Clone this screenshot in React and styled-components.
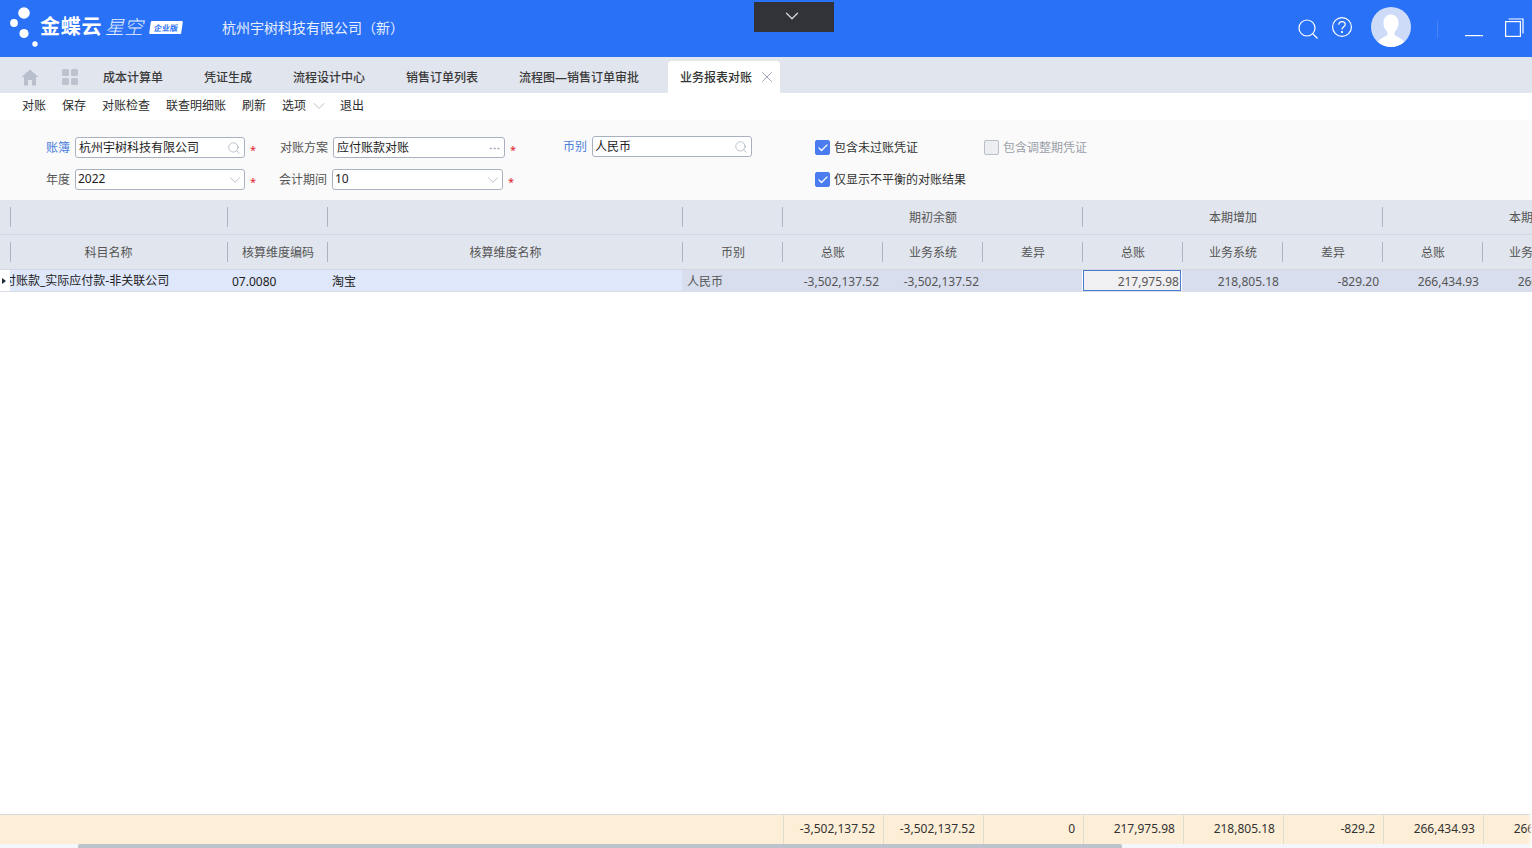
import React from 'react';
import styled, { createGlobalStyle } from 'styled-components';
import { ChevronDown, Search, X, Ellipsis, Check } from 'lucide-react';

const GlobalStyle = createGlobalStyle`
  html, body {
    margin: 0;
    padding: 0;
    height: 100%;
    overflow: hidden;
    background: #fff;
  }
  body {
    font-family: "Noto Sans", "Noto Sans CJK SC", sans-serif;
    font-size: 12px;
    color: #333;
  }
`;

const Page = styled.div`
  position: relative;
  width: 1532px;
  height: 848px;
  display: flex;
  flex-direction: column;
  overflow: hidden;

  &::after {
    content: '';
    position: absolute;
    right: 0;
    bottom: 0;
    width: 4px;
    height: 48px;
    background: linear-gradient(to right, rgba(255, 255, 255, 0), #fff);
  }
`;

const Header = styled.header`
  position: relative;
  height: 57px;
  flex: none;
  background: #2971f6;
  display: flex;
  align-items: center;
  padding-left: 10px;
  color: #fff;
`;

const Logo = styled.div`
  display: flex;
  align-items: center;
  width: 212px;
  height: 57px;
`;

const LogoName = styled.span`
  font-size: 20px;
  font-weight: 700;
  line-height: 24px;
  letter-spacing: 0.7px;
  margin-bottom: 4px;
`;

const LogoProduct = styled.span`
  margin-left: 3px;
  font-size: 19px;
  font-weight: 300;
  font-style: italic;
  line-height: 24px;
  opacity: 0.9;
  margin-bottom: 4px;
`;

const LogoBadge = styled.span`
  margin-left: 7px;
  width: 32px;
  height: 13px;
  background: #fff;
  color: #2971f6;
  font-size: 8px;
  font-weight: 700;
  line-height: 13px;
  text-align: center;
  border-radius: 1px;
  transform: skewX(-8deg);
  margin-bottom: 2px;
`;

const Company = styled.div`
  font-size: 14px;
  color: #e8effe;
  line-height: 20px;
  margin-bottom: 2px;
`;

const DropTab = styled.div`
  position: absolute;
  left: 754px;
  top: 2px;
  width: 80px;
  height: 30px;
  background: #323338;
  color: #d5d6da;
  display: flex;
  align-items: center;
  justify-content: center;
  padding: 0 4px 2px 0;
  box-sizing: border-box;
`;

const HeaderTools = styled.div`
  margin-left: auto;
  display: flex;
  align-items: center;
  padding-right: 8px;
  height: 100%;
`;

const ToolIcon = styled.svg`
  display: block;
  flex: none;
  margin-left: ${p => p.$left || 0}px;
  margin-top: ${p => p.$top || 0}px;
`;

const Avatar = styled.div`
  width: 40px;
  height: 40px;
  margin-left: 19px;
  border-radius: 50%;
  background: #cddbf9;
  overflow: hidden;
  flex: none;
  margin-top: -3px;
`;

const VLine = styled.div`
  width: 1px;
  height: 17px;
  margin-left: 26px;
  background: #4a84f4;
  margin-top: 2px;
`;

const TabBar = styled.nav`
  height: 36px;
  flex: none;
  background: #e1e5ee;
  display: flex;
  align-items: flex-end;
  padding-left: 21px;
`;

const TabIcons = styled.div`
  height: 32px;
  display: flex;
  align-items: center;
  gap: 23px;
  margin-right: 25px;
`;

const Tab = styled.div`
  height: 32px;
  display: flex;
  align-items: center;
  margin-right: 41px;
  font-size: 12px;
  font-weight: 500;
  color: #3a3a3a;
  white-space: nowrap;
`;

const ActiveTab = styled(Tab)`
  margin-left: -12px;
  padding: 0 4px 0 12px;
  background: #fff;
  border-radius: 4px 4px 0 0;
  gap: 6px;
  color: #333;
`;

const CloseIcon = styled(X)`
  color: #9aa3b5;
`;

const Toolbar = styled.div`
  height: 27px;
  flex: none;
  box-sizing: border-box;
  padding: 0 0 2px 22px;
  background: #fff;
  display: flex;
  align-items: center;
  gap: 16px;
`;

const ToolButton = styled.span`
  font-size: 12px;
  line-height: 24px;
  color: #2c2c2c;
  display: flex;
  align-items: center;
  gap: 3px;
  white-space: nowrap;
`;

const MenuChevron = styled(ChevronDown)`
  color: #a5acb8;
  margin-right: -5px;
`;

const Filter = styled.section`
  height: 80px;
  flex: none;
  box-sizing: border-box;
  background: #fafafa;
  padding-top: 17px;
  display: flex;
  flex-direction: column;
  gap: 11px;
`;

const FilterRow = styled.div`
  display: flex;
  height: 21px;
  align-items: flex-start;
`;

const Field = styled.div`
  width: ${p => p.$width}px;
  flex: none;
  display: flex;
  align-items: center;
  margin-top: ${p => (p.$lift ? -1 : 0)}px;
`;

const FieldLabel = styled.label`
  width: ${p => p.$width}px;
  flex: none;
  text-align: right;
  font-size: 12px;
  padding-bottom: 2px;
  color: ${p => (p.$link ? '#4a7fdc' : '#555')};
  margin-right: ${p => p.$gap ?? 5}px;
`;

const InputBox = styled.div`
  width: ${p => p.$width}px;
  height: 21px;
  flex: none;
  box-sizing: border-box;
  border: 1px solid #a9b0bf;
  border-radius: 3px;
  background: #fff;
  display: flex;
  align-items: center;
  justify-content: space-between;
  padding: 0 ${p => p.$right ?? 3}px 2px ${p => p.$pad ?? 3}px;
  font-size: 12px;
  color: #222;
`;

const InputIcon = styled.span`
  display: flex;
  color: #98a0ae;
  margin-top: 3px;
`;

const Star = styled.span`
  margin-left: 5px;
  color: #e0202a;
  font-size: 11px;
  line-height: 14px;
  margin-top: 5px;
`;

const CheckField = styled.div`
  width: ${p => p.$width}px;
  flex: none;
  display: flex;
  align-items: center;
  gap: 4px;
  height: 21px;
  font-size: 12px;
  color: ${p => (p.$disabled ? '#9a9fa8' : '#333')};
  white-space: nowrap;
`;

const CheckText = styled.span`
  padding-bottom: 2px;
`;

const CheckBox = styled.span`
  width: 15px;
  height: 15px;
  flex: none;
  box-sizing: border-box;
  border-radius: 2px;
  display: flex;
  align-items: center;
  justify-content: center;
  color: #fff;
  background: ${p => (p.$checked ? '#4a7cf0' : '#eceef2')};
  border: 1px solid ${p => (p.$checked ? '#4a7cf0' : '#b9bec8')};
`;

const GridWrap = styled.section`
  flex: 1;
  min-height: 0;
  overflow: hidden;
  background: #fff;
`;

const columns = '10px 217px 100px 355px 100px repeat(9, 100px)';

const HeadRow = styled.div`
  display: grid;
  grid-template-columns: ${columns};
  width: 1532px;
  height: ${p => p.$height}px;
  box-sizing: border-box;
  background: #e1e5ed;
  border-bottom: 1px solid #d2d7e1;
  overflow: hidden;
`;

const HeadCell = styled.div`
  grid-column: span ${p => p.$span || 1};
  position: relative;
  display: flex;
  align-items: center;
  justify-content: center;
  box-sizing: border-box;
  padding: 0 ${p => p.$inset || 0}px 0 2px;
  white-space: nowrap;
  font-size: 12px;
  color: #555;
  height: 100%;
  min-width: 0;

  &::before {
    content: '';
    display: ${p => (p.$plain ? 'none' : 'block')};
    position: absolute;
    left: 0;
    top: 7px;
    width: 1px;
    height: 20px;
    background: #aeb4bf;
  }
`;

const DataRow = styled.div`
  display: grid;
  grid-template-columns: ${columns};
  width: 1532px;
  height: 22px;
  box-sizing: border-box;
  border-bottom: 1px solid #d9dde7;
  overflow: hidden;
`;

const RowMarker = styled.div`
  display: flex;
  align-items: center;
  padding-left: 2px;
  background: #fff;
`;

const MarkerArrow = styled.span`
  width: 0;
  height: 0;
  border-left: 4px solid #1f2a3a;
  border-top: 3.5px solid transparent;
  border-bottom: 3.5px solid transparent;
`;

const DataCell = styled.div`
  display: flex;
  align-items: center;
  justify-content: ${p => (p.$right ? 'flex-end' : 'flex-start')};
  box-sizing: border-box;
  padding: ${p => (p.$right ? '1px 3px 0 0' : '1px 5px 0')};
  background: ${p => (p.$light ? '#dfe7fb' : '#d8deed')};
  color: ${p => (p.$light ? '#222' : '#555')};
  font-size: 12px;
  white-space: nowrap;
  overflow: hidden;
  min-width: 0;
`;

const ClippedCell = styled(DataCell)`
  padding: 0;
  display: block;
  line-height: 21px;
  text-indent: -18px;
`;

const SelectedCell = styled(DataCell)`
  margin: 0 1px;
  height: 21px;
  background: #f0f0f3;
  border: 1px solid #4a7bd0;
  padding-right: 1px;
`;

const FooterRow = styled.div`
  display: grid;
  grid-template-columns: 784px repeat(8, 100px);
  width: 1532px;
  height: 30px;
  flex: none;
  box-sizing: border-box;
  background: #fdeed7;
  border-top: 1px solid #d9dcdf;
  overflow: hidden;
`;

const FooterCell = styled.div`
  display: flex;
  align-items: center;
  justify-content: flex-end;
  box-sizing: border-box;
  padding: 0 8px 2px 0;
  border-right: 1px solid #e2dccf;
  font-size: 12px;
  color: #333;
  white-space: nowrap;
  min-width: 0;
`;

const ScrollTrack = styled.div`
  height: 4px;
  flex: none;
  background: #f4f6f9;
  padding-left: 78px;
`;

const ScrollThumb = styled.div`
  width: 1044px;
  height: 4px;
  background: #bcc3cd;
  border-radius: 2px 2px 0 0;
`;

const LogoMark = () => (
  <svg width="30" height="57" viewBox="0 0 30 57" fill="#fff">
    <circle cx="14" cy="13" r="5.8" />
    <circle cx="4" cy="23" r="3.9" />
    <circle cx="14" cy="33.5" r="4.6" />
    <circle cx="25" cy="44" r="2.7" />
  </svg>
);

const HomeIcon = () => (
  <svg width="18" height="17" viewBox="0 0 18 17">
    <path d="M9 0.5 L17.5 8 L15 8 L15 16.5 L11 16.5 L11 11 L7 11 L7 16.5 L3 16.5 L3 8 L0.5 8 Z" fill="#b9c0cd" />
  </svg>
);

const AppsIcon = () => (
  <svg width="16" height="16" viewBox="0 0 16 16" fill="#bcc3cf">
    <rect x="0" y="0" width="7" height="7" rx="1.5" />
    <rect x="9" y="0" width="7" height="7" rx="1.5" />
    <rect x="0" y="9" width="7" height="7" rx="1.5" />
    <rect x="9" y="9" width="7" height="7" rx="1.5" />
  </svg>
);

const topHead = [
  { span: 1, plain: true },
  { span: 1 },
  { span: 1 },
  { span: 1 },
  { span: 1 },
  { span: 3, text: '期初余额' },
  { span: 3, text: '本期增加' },
  { span: 3, text: '本期减少' },
];

const subHead = ['', '科目名称', '核算维度编码', '核算维度名称', '币别', '总账', '业务系统', '差异', '总账', '业务系统', '差异', '总账', '业务系统'];

const totals = ['-3,502,137.52', '-3,502,137.52', '0', '217,975.98', '218,805.18', '-829.2', '266,434.93', '266,434.93'];

function App() {
  return (
    <Page>
      <GlobalStyle />
      <Header>
        <Logo>
          <LogoMark />
          <LogoName>金蝶云</LogoName>
          <LogoProduct>星空</LogoProduct>
          <LogoBadge>企业版</LogoBadge>
        </Logo>
        <Company>杭州宇树科技有限公司（新）</Company>
        <DropTab><ChevronDown size={22} strokeWidth={1.4} /></DropTab>
        <HeaderTools>
          <ToolIcon width="20" height="20" viewBox="0 0 20 20" fill="none" stroke="#fff" strokeWidth="1.2" $top={1}>
            <circle cx="9" cy="9" r="8" />
            <path d="M15 15 L19.5 19.5" />
          </ToolIcon>
          <ToolIcon width="20" height="20" viewBox="0 0 20 20" fill="none" stroke="#fff" strokeWidth="1.2" $left={14} $top={-3}>
            <circle cx="10" cy="10" r="9.4" />
            <path d="M6.8 7.8 C6.8 5.8 8.3 4.6 10 4.6 C11.8 4.6 13.2 5.8 13.2 7.4 C13.2 9.8 10 9.8 10 12.6" />
            <circle cx="10" cy="15" r="0.5" fill="#fff" />
          </ToolIcon>
          <Avatar>
            <svg width="40" height="40" viewBox="0 0 40 40" fill="#fff">
              <path d="M20 7.5 C15.5 7.5 12.5 11 12.5 16 C12.5 19.5 14 23 16.5 25 L16.5 28 C12 30.5 9 31.5 7 35 C10 38.5 15 40 20 40 C25 40 30 38.5 33 35 C31 31.5 28 30.5 23.5 28 L23.5 25 C26 23 27.5 19.5 27.5 16 C27.5 11 24.5 7.5 20 7.5 Z" />
            </svg>
          </Avatar>
          <VLine />
          <ToolIcon width="18" height="2" viewBox="0 0 18 2" $left={27} $top={14}>
            <rect width="18" height="1.2" fill="#fff" />
          </ToolIcon>
          <ToolIcon width="19" height="19" viewBox="0 0 19 19" fill="none" stroke="#fff" strokeWidth="1.2" $left={22} $top={-3}>
            <rect x="0.6" y="3.6" width="14.8" height="14.8" />
            <path d="M3.6 1 L18 1 L18 15.4" />
          </ToolIcon>
        </HeaderTools>
      </Header>

      <TabBar>
        <TabIcons>
          <HomeIcon />
          <AppsIcon />
        </TabIcons>
        <Tab>成本计算单</Tab>
        <Tab>凭证生成</Tab>
        <Tab>流程设计中心</Tab>
        <Tab>销售订单列表</Tab>
        <Tab>流程图—销售订单审批</Tab>
        <ActiveTab>
          业务报表对账
          <CloseIcon size={18} strokeWidth={1.3} />
        </ActiveTab>
      </TabBar>

      <Toolbar>
        <ToolButton>对账</ToolButton>
        <ToolButton>保存</ToolButton>
        <ToolButton>对账检查</ToolButton>
        <ToolButton>联查明细账</ToolButton>
        <ToolButton>刷新</ToolButton>
        <ToolButton>选项<MenuChevron size={20} strokeWidth={0.9} /></ToolButton>
        <ToolButton>退出</ToolButton>
      </Toolbar>

      <Filter>
        <FilterRow>
          <Field $width={255}>
            <FieldLabel $width={70} $link>账簿</FieldLabel>
            <InputBox $width={170}>
              杭州宇树科技有限公司
              <InputIcon><Search size={14} strokeWidth={1.1} /></InputIcon>
            </InputBox>
            <Star>*</Star>
          </Field>
          <Field $width={308}>
            <FieldLabel $width={73}>对账方案</FieldLabel>
            <InputBox $width={172}>
              应付账款对账
              <InputIcon><Ellipsis size={13} strokeWidth={1.6} /></InputIcon>
            </InputBox>
            <Star>*</Star>
          </Field>
          <Field $width={252} $lift>
            <FieldLabel $width={24} $link>币别</FieldLabel>
            <InputBox $width={160} $pad={2}>
              人民币
              <InputIcon><Search size={14} strokeWidth={1.1} /></InputIcon>
            </InputBox>
          </Field>
          <CheckField $width={169}>
            <CheckBox $checked><Check size={12} strokeWidth={2.4} /></CheckBox>
            <CheckText>包含未过账凭证</CheckText>
          </CheckField>
          <CheckField $width={120} $disabled>
            <CheckBox />
            <CheckText>包含调整期凭证</CheckText>
          </CheckField>
        </FilterRow>
        <FilterRow>
          <Field $width={255}>
            <FieldLabel $width={70}>年度</FieldLabel>
            <InputBox $width={170} $pad={2} $right={0}>
              2022
              <InputIcon><ChevronDown size={18} strokeWidth={0.9} /></InputIcon>
            </InputBox>
            <Star>*</Star>
          </Field>
          <Field $width={560}>
            <FieldLabel $width={72}>会计期间</FieldLabel>
            <InputBox $width={171} $pad={2} $right={0}>
              10
              <InputIcon><ChevronDown size={18} strokeWidth={0.9} /></InputIcon>
            </InputBox>
            <Star>*</Star>
          </Field>
          <CheckField $width={169}>
            <CheckBox $checked><Check size={12} strokeWidth={2.4} /></CheckBox>
            <CheckText>仅显示不平衡的对账结果</CheckText>
          </CheckField>
        </FilterRow>
      </Filter>

      <GridWrap>
        <HeadRow $height={35}>
          {topHead.map((c, i) => (
            <HeadCell key={i} $span={c.span} $plain={c.plain}>{c.text}</HeadCell>
          ))}
        </HeadRow>
        <HeadRow $height={35}>
          {subHead.map((t, i) => (
            <HeadCell key={i} $plain={i === 0} $inset={i === 1 ? 22 : 0}>{t}</HeadCell>
          ))}
        </HeadRow>
        <DataRow>
          <RowMarker><MarkerArrow /></RowMarker>
          <ClippedCell $light>应付账款_实际应付款-非关联公司</ClippedCell>
          <DataCell $light>07.0080</DataCell>
          <DataCell $light>淘宝</DataCell>
          <DataCell>人民币</DataCell>
          <DataCell $right>-3,502,137.52</DataCell>
          <DataCell $right>-3,502,137.52</DataCell>
          <DataCell $right />
          <SelectedCell $right>217,975.98</SelectedCell>
          <DataCell $right>218,805.18</DataCell>
          <DataCell $right>-829.20</DataCell>
          <DataCell $right>266,434.93</DataCell>
          <DataCell $right>266,434.93</DataCell>
        </DataRow>
      </GridWrap>

      <FooterRow>
        <FooterCell />
        {totals.map((t, i) => (
          <FooterCell key={i}>{t}</FooterCell>
        ))}
      </FooterRow>
      <ScrollTrack><ScrollThumb /></ScrollTrack>
    </Page>
  );
}

export default App;
